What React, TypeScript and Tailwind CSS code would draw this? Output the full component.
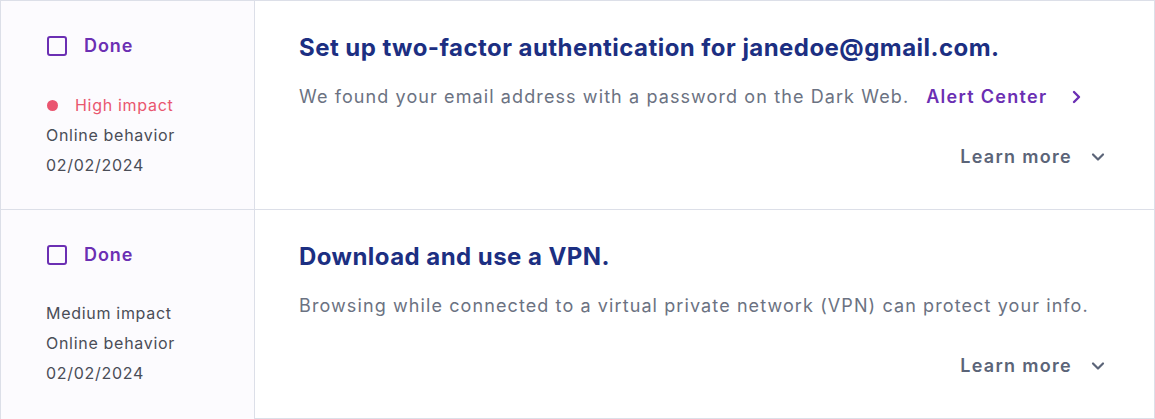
import React from "react";

const font = { fontFamily: "Inter, 'Noto Sans', sans-serif" };

function Check() {
  return <span className="block w-[20px] h-[20px] rounded-[3px] border-[2.5px] border-[#6b2fb3]" />;
}

function ChevronDown() {
  return (
    <svg width="14" height="10" viewBox="0 0 14 10" fill="none">
      <path d="M2 2.5 L7 7.5 L12 2.5" stroke="#5b6478" strokeWidth="2.2" strokeLinecap="round" strokeLinejoin="round" />
    </svg>
  );
}

function ChevronRight() {
  return (
    <svg width="10" height="14" viewBox="0 0 10 14" fill="none">
      <path d="M3 2 L8 7 L3 12" stroke="#6b2fb3" strokeWidth="2.4" strokeLinecap="round" strokeLinejoin="round" />
    </svg>
  );
}

function Row({
  impact,
  high,
  title,
  desc,
  link,
  last,
}: {
  impact: string;
  high?: boolean;
  title: string;
  desc: string;
  link?: string;
  last?: boolean;
}) {
  return (
    <div className={`flex h-[209px] ${last ? "" : "border-b border-[#dcdfe8]"}`}>
      <div className="w-[254px] shrink-0 bg-[#fcfbfe] border-r border-[#dcdfe8] pl-[46px] pt-[34px]">
        <div className="flex items-center h-[21px]">
          <Check />
          <span className="ml-[17px] text-[18px] font-semibold text-[#6b2fb3] tracking-[0.9px]">Done</span>
        </div>
        <div className={`${high ? "mt-[34px]" : "mt-[33px]"} text-[16px] leading-[30px] text-[#4a4d57] tracking-[0.7px]`}>
          {high ? (
            <div className="flex items-center text-[#e9566f]">
              <span className="w-[11px] h-[11px] rounded-full bg-[#ea5570] mr-[17px]" />
              {impact}
            </div>
          ) : (
            <div className="-ml-[1px]">{impact}</div>
          )}
          <div className="-ml-[1px]">Online behavior</div>
          <div className="-ml-[1px]">02/02/2024</div>
        </div>
      </div>
      <div className="flex-1 pl-[44px] pr-[48px] pt-[31px]">
        <div className="text-[24px] leading-[32px] font-bold text-[#1c2f82] tracking-[0.45px]">{title}</div>
        <div className="mt-[19px] flex items-center text-[18px] leading-[28px] text-[#6b7282] tracking-[1.1px]">
          <span>{desc}</span>
          {link && (
            <span className="ml-[17px] flex items-center font-semibold text-[#6b2fb3] tracking-[1.3px]">
              {link}
              <span className="ml-[24px]"><ChevronRight /></span>
            </span>
          )}
        </div>
        <div className="mt-[32px] flex items-center justify-end pr-[1px]">
          <span className="text-[18px] leading-[28px] font-semibold text-[#5b6478] tracking-[1.3px]">Learn more</span>
          <span className="ml-[19px]"><ChevronDown /></span>
        </div>
      </div>
    </div>
  );
}

export default function App() {
  return (
    <div style={font} className="w-[1155px] h-[419px] bg-white">
      <div className="border border-[#dcdfe8] h-[419px]">
        <Row
          high
          impact="High impact"
          title="Set up two-factor authentication for janedoe@gmail.com."
          desc="We found your email address with a password on the Dark Web."
          link="Alert Center"
        />
        <Row
          last
          impact="Medium impact"
          title="Download and use a VPN."
          desc="Browsing while connected to a virtual private network (VPN) can protect your info."
        />
      </div>
    </div>
  );
}
